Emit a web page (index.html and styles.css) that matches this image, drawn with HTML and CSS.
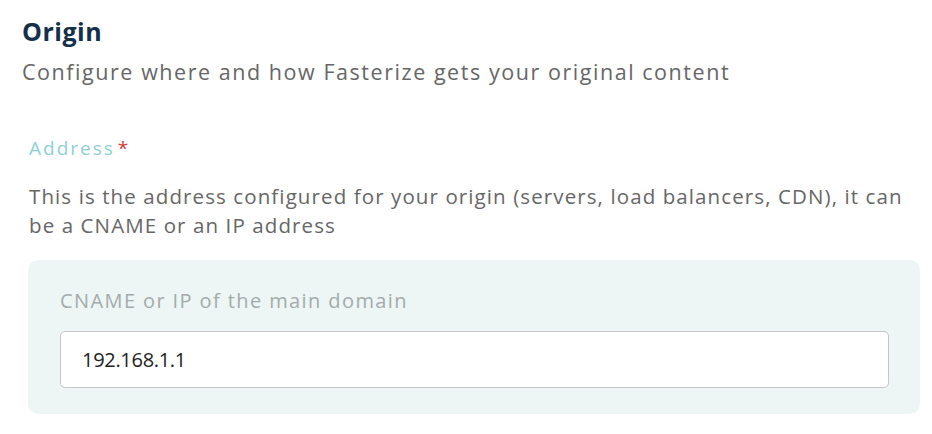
FILE: index.html
```html
<!DOCTYPE html>
<html lang="en">
<head>
<meta charset="utf-8">
<title>Origin</title>
<link rel="stylesheet" href="styles.css">
</head>
<body>
<section class="origin">
  <h2 class="title">Origin</h2>
  <p class="subtitle">Configure where and how Fasterize gets your original content</p>
  <div class="field">
    <div class="label">Address<span class="req">*</span></div>
    <p class="help">This is the address configured for your origin (servers, load balancers, CDN), it can be a CNAME or an IP address</p>
    <div class="box">
      <div class="box-label">CNAME or IP of the main domain</div>
      <div class="input">192.168.1.1</div>
    </div>
  </div>
</section>
</body>
</html>
```
FILE: styles.css
```css
html, body {
  margin: 0;
  padding: 0;
  background: #ffffff;
}
body {
  font-family: "Open Sans", "Noto Sans", sans-serif;
  width: 932px;
  height: 434px;
  overflow: hidden;
}
.origin {
  padding: 15px 12px 0 22px;
}
.title {
  margin: 0;
  font-size: 25px;
  line-height: 32px;
  font-weight: 700;
  color: #14304a;
  letter-spacing: 0.5px;
}
.subtitle {
  margin: 10px 0 0 0;
  font-size: 21.5px;
  line-height: 30px;
  color: #666666;
  letter-spacing: 1.55px;
}
.field {
  margin: 49px 0 0 7px;
}
.label {
  font-size: 19px;
  line-height: 24px;
  color: #8dd0d4;
  letter-spacing: 2px;
}
.req {
  color: #d93a3a;
  margin-left: 3px;
}
.help {
  margin: 22px 0 0 0;
  max-width: 891px;
  font-size: 20.5px;
  line-height: 29px;
  color: #666666;
  letter-spacing: 1.1px;
}
.box {
  margin: 20px 0 0 -1px;
  background: #eef6f5;
  border-radius: 10px;
  padding: 27px 31px 26px 32px;
}
.box-label {
  font-size: 20px;
  line-height: 28px;
  color: #a3abab;
  letter-spacing: 1.4px;
}
.input {
  margin-top: 16px;
  box-sizing: border-box;
  height: 57px;
  background: #ffffff;
  border: 1px solid #c6c6c6;
  border-radius: 5px;
  padding: 0 21px;
  display: flex;
  align-items: center;
  font-size: 20px;
  color: #222222;
  letter-spacing: -0.3px;
}
```
